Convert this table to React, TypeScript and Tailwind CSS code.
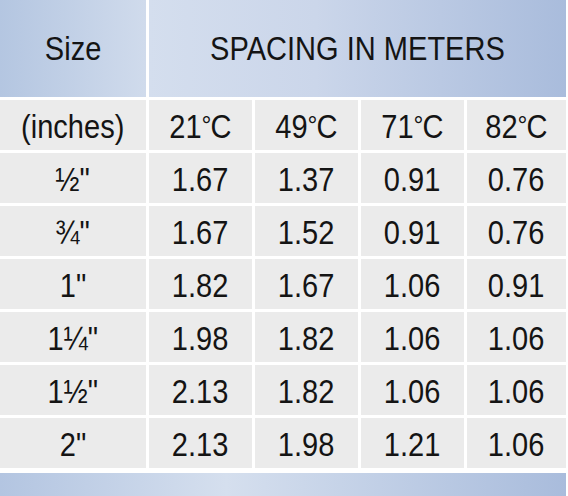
import React from 'react'

const rows: string[][] = [
  ['½"', '1.67', '1.37', '0.91', '0.76'],
  ['¾"', '1.67', '1.52', '0.91', '0.76'],
  ['1"', '1.82', '1.67', '1.06', '0.91'],
  ['1¼"', '1.98', '1.82', '1.06', '1.06'],
  ['1½"', '2.13', '1.82', '1.06', '1.06'],
  ['2"', '2.13', '1.98', '1.21', '1.06'],
]

const temps = ['21', '49', '71', '82']

// text is a condensed Arial look, so squeeze it a little
function Txt({ children }: { children: React.ReactNode }) {
  return <span className="inline-block scale-x-[0.88] whitespace-nowrap">{children}</span>
}

function Cell({ children }: { children: React.ReactNode }) {
  return (
    <div className="flex items-center justify-center bg-[#ebebeb] pt-[2px]">
      <Txt>{children}</Txt>
    </div>
  )
}

export default function App() {
  return (
    <div
      className="w-[568px] h-[496px] overflow-hidden bg-white text-[#141414] text-[33px] leading-none"
      style={{ fontFamily: '"Liberation Sans", Arial, sans-serif' }}
    >
      <div className="w-[566px] grid grid-cols-[146px_103px_103px_103px_99px] grid-rows-[97px_repeat(7,50px)] gap-[3px]">
        <div className="flex items-center justify-center bg-linear-to-r from-[#b4c6e1] to-[#d0dbec]">
          <Txt>Size</Txt>
        </div>
        <div className="col-span-4 flex items-center justify-center bg-linear-to-r from-[#d4deee] via-[#cbd6ea] via-40% to-[#a9bcdc]">
          <Txt>SPACING IN METERS</Txt>
        </div>

        <Cell>(inches)</Cell>
        {temps.map((t) => (
          <Cell key={t}>
            {t}
            <span className="text-[28px] align-[3px] tracking-[-1px]">°</span>C
          </Cell>
        ))}

        {rows.map((r) =>
          r.map((v, i) => <Cell key={r[0] + i}>{v}</Cell>)
        )}
      </div>
      <div className="w-[566px] h-[23px] mt-[5px] bg-linear-to-r from-[#b3c5e1] via-[#d5dfee] via-40% to-[#a9bcdc]" />
    </div>
  )
}
